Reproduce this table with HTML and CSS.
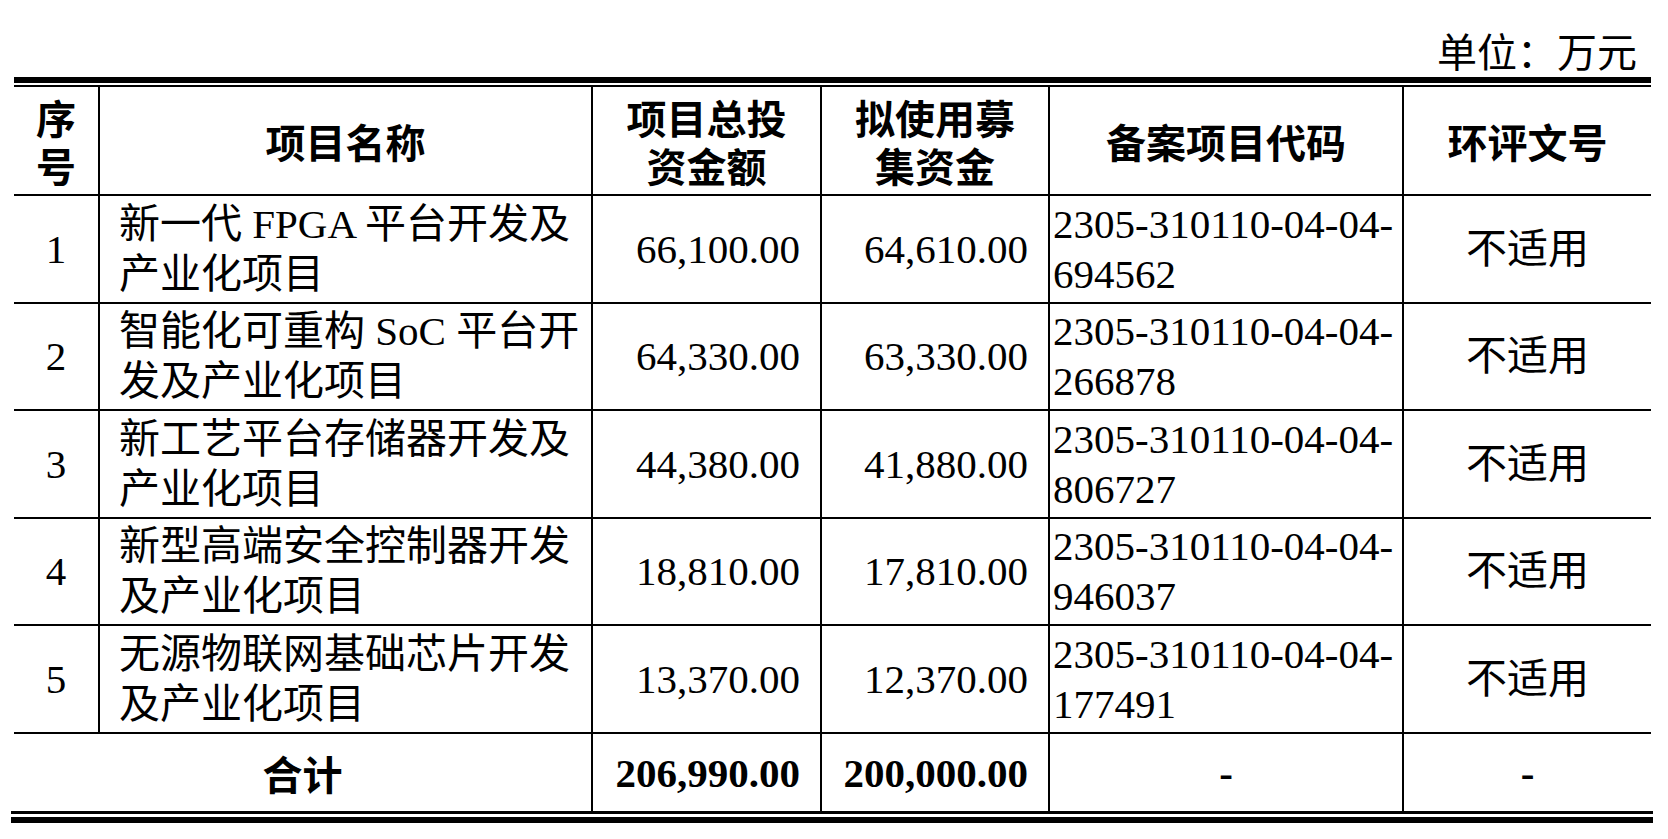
FILE: index.html
```html
<!DOCTYPE html>
<html lang="zh-CN">
<head>
<meta charset="utf-8">
<title>募集资金投资项目</title>
<link rel="stylesheet" href="styles.css">
</head>
<body>
<div class="page">
  <div class="unit">单位：万元</div>
  <div class="rule-top"></div>
  <div class="grid">
    <div class="c h">序<br>号</div>
    <div class="c h">项目名称</div>
    <div class="c h">项目总投<br>资金额</div>
    <div class="c h">拟使用募<br>集资金</div>
    <div class="c h">备案项目代码</div>
    <div class="c h last">环评文号</div>

    <div class="c ctr">1</div>
    <div class="c name">新一代 FPGA 平台开发及<br>产业化项目</div>
    <div class="c num">66,100.00</div>
    <div class="c num">64,610.00</div>
    <div class="c code">2305-310110-04-04-<br>694562</div>
    <div class="c ctr last">不适用</div>

    <div class="c ctr">2</div>
    <div class="c name">智能化可重构 SoC 平台开<br>发及产业化项目</div>
    <div class="c num">64,330.00</div>
    <div class="c num">63,330.00</div>
    <div class="c code">2305-310110-04-04-<br>266878</div>
    <div class="c ctr last">不适用</div>

    <div class="c ctr">3</div>
    <div class="c name">新工艺平台存储器开发及<br>产业化项目</div>
    <div class="c num">44,380.00</div>
    <div class="c num">41,880.00</div>
    <div class="c code">2305-310110-04-04-<br>806727</div>
    <div class="c ctr last">不适用</div>

    <div class="c ctr">4</div>
    <div class="c name">新型高端安全控制器开发<br>及产业化项目</div>
    <div class="c num">18,810.00</div>
    <div class="c num">17,810.00</div>
    <div class="c code">2305-310110-04-04-<br>946037</div>
    <div class="c ctr last">不适用</div>

    <div class="c ctr">5</div>
    <div class="c name">无源物联网基础芯片开发<br>及产业化项目</div>
    <div class="c num">13,370.00</div>
    <div class="c num">12,370.00</div>
    <div class="c code">2305-310110-04-04-<br>177491</div>
    <div class="c ctr last">不适用</div>

    <div class="c t span2 total-label">合计</div>
    <div class="c t num bold">206,990.00</div>
    <div class="c t num bold">200,000.00</div>
    <div class="c t ctr bold">-</div>
    <div class="c t ctr bold last">-</div>
  </div>
  <div class="rule-bottom"></div>
</div>
</body>
</html>
```

FILE: styles.css
```css
html, body {
  margin: 0;
  padding: 0;
  background: #ffffff;
}

.page {
  box-sizing: border-box;
  margin-left: 14px;
  width: 1637px;
  font-family: "Liberation Serif", "Noto Sans CJK SC", serif;
  color: #000000;
}

.unit {
  box-sizing: border-box;
  height: 70px;
  padding-top: 30px;
  padding-right: 14px;
  margin-bottom: 7px;
  text-align: right;
  font-size: 40px;
  line-height: 40px;
  font-family: "Noto Sans CJK SC", sans-serif;
}

.rule-top {
  border-top: 6px solid #000;
  border-bottom: 2px solid #000;
  height: 2px;
}

.grid {
  display: grid;
  grid-template-columns: 86px 493px 229px 228px 354px 247px;
  grid-template-rows: 109px repeat(5, 107.5px) 77.5px;
}

.c {
  box-sizing: border-box;
  border-right: 2px solid #000;
  border-bottom: 2px solid #000;
  display: flex;
  align-items: center;
  font-size: 41px;
  line-height: 50px;
  white-space: nowrap;
}

.c.last {
  border-right: none;
}

.c.t {
  border-bottom: none;
  padding-top: 2px;
}

.h {
  justify-content: center;
  text-align: center;
  font-family: "Noto Sans CJK SC", sans-serif;
  font-weight: 700;
  font-size: 40px;
  line-height: 48px;
}

.ctr {
  justify-content: center;
  text-align: center;
}

.name {
  justify-content: flex-start;
  padding-left: 19px;
}

.num {
  justify-content: flex-end;
  padding-right: 20px;
}

.code {
  justify-content: flex-start;
  padding-left: 3px;
}

.span2 {
  grid-column: span 2;
}

.total-label {
  justify-content: center;
  font-family: "Noto Sans CJK SC", sans-serif;
  font-weight: 700;
  font-size: 40px;
}

.bold {
  font-weight: 700;
}

.rule-bottom {
  margin-left: -3px;
  width: 1642px;
  border-top: 3px solid #000;
  height: 3px;
  border-bottom: 6px solid #000;
}
```
